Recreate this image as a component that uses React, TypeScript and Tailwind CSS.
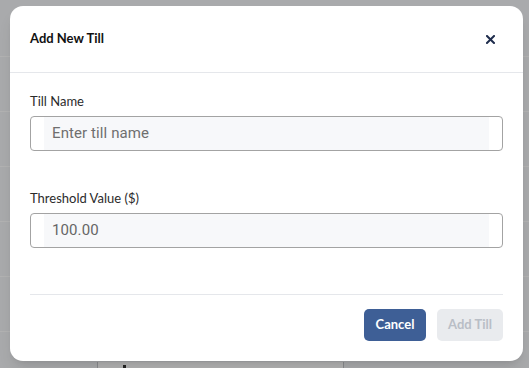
import { useState } from 'react';

const labelFont = "font-['Lato','Open_Sans',sans-serif]";
const inputFont = "font-['Roboto','Liberation_Sans',sans-serif]";

function Field({ label, value, placeholder }: { label: string; value: string; placeholder?: string }) {
  const [val, setVal] = useState(value);
  return (
    <div className="flex flex-col">
      <label className={`${labelFont} text-[13px] leading-5 text-[#2b2b2b] mb-[5px]`}>{label}</label>
      <div className="h-[35px] rounded-[4px] border border-[#a3a3a3] bg-white px-[13px] flex">
        <input
          value={val}
          placeholder={placeholder}
          onChange={e => setVal(e.target.value)}
          className={`${inputFont} flex-1 min-w-0 bg-[#f7f8fa] px-2 text-[15px] tracking-[0.1px] text-[#666] placeholder:text-[#6f6f6f] outline-none`}
        />
      </div>
    </div>
  );
}

export default function App() {
  return (
    <div className="relative h-[368px] w-[529px] overflow-hidden bg-[#f2f4f7]">
      {/* page behind the dialog */}
      <div className="flex flex-col pt-[56px]">
        {[...Array(6)].map((_, i) => (
          <div key={i} className="h-[55px] border-t border-white" />
        ))}
      </div>
      <div className="absolute left-[97px] top-[362px] w-[247px] h-[40px] bg-white border-x border-[#c4c7cc]">
        <div className="absolute left-[25px] top-[3px] w-[3px] h-[3px] bg-[#333]" />
      </div>

      {/* overlay */}
      <div className="absolute inset-0 bg-black/30 pl-[10px] pt-[6px]">
        <div className="w-[513px] h-[355px] rounded-[13px] bg-white flex flex-col shadow-lg">
          <div className="h-[67px] shrink-0 border-b border-[#e5e7eb] flex items-center justify-between pl-5 pr-[28px]">
            <h2 className={`${labelFont} text-[13px] font-bold text-[#111]`}>Add New Till</h2>
            <button className="text-[#1f2d4d]">
              <svg width="9" height="9" viewBox="0 0 9 9" fill="none" stroke="currentColor" strokeWidth="2" strokeLinecap="square">
                <path d="M1 1L8 8M8 1L1 8" />
              </svg>
            </button>
          </div>
          <div className="flex flex-col px-5 pt-[18px]">
            <Field label="Till Name" value="" placeholder="Enter till name" />
            <div className="h-[37px]" />
            <Field label="Threshold Value ($)" value="100.00" />
            <div className="mt-[46px] border-t border-[#e5e7eb] pt-[14px] flex justify-end gap-[11px]">
              <button className={`${labelFont} h-8 w-[62px] rounded-[5px] bg-[#3e5f96] text-white text-[13px] font-bold`}>
                Cancel
              </button>
              <button
                disabled
                className={`${labelFont} h-8 w-[66px] rounded-[5px] bg-[#e9ebee] text-[#b9bec6] text-[13px] font-bold`}
              >
                Add Till
              </button>
            </div>
          </div>
        </div>
      </div>
    </div>
  );
}
